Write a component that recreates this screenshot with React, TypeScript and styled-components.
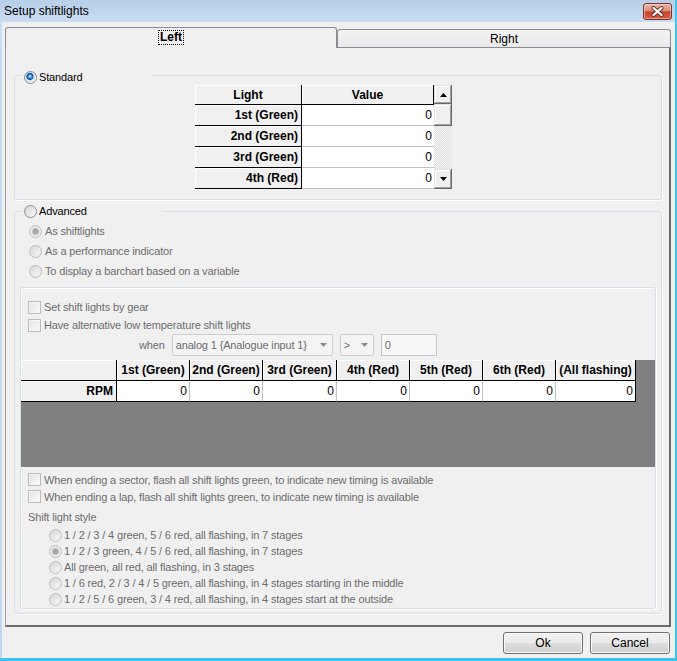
import React from "react";
import styled, { createGlobalStyle } from "styled-components";

// Global page reset
const GlobalStyle = createGlobalStyle`
  html, body {
    margin: 0;
    padding: 0;
    background: #ffffff;
  }
  body {
    font-family: "Liberation Sans", Arial, sans-serif;
    font-size: 11px;
  }
  * {
    box-sizing: border-box;
  }
`;

// Window frame
const Window = styled.div`
  width: 677px;
  height: 661px;
  display: flex;
  flex-direction: column;
  background: linear-gradient(180deg, #b7cfe9 0px, #cadcf1 22px, #c3d8ee 100%);
  border-right: 2px solid #3cc4ef;
  border-bottom: 3px solid #3cc4ef;
  overflow: hidden;
`;

const TitleBar = styled.div`
  flex: none;
  height: 22px;
  display: flex;
  align-items: center;
  padding: 0 3px 0 4px;
  font-size: 12px;
  color: #000;
`;

const Title = styled.span`
  flex: 1;
`;

const CloseButton = styled.div`
  width: 29px;
  height: 17px;
  border: 1px solid #80302a;
  border-radius: 3px;
  background: linear-gradient(
    180deg,
    #eab3a6 0%,
    #dc8c7b 45%,
    #c8452f 52%,
    #d2604a 100%
  );
  box-shadow: inset 0 0 0 1px rgba(255, 255, 255, 0.4);
  display: flex;
  align-items: center;
  justify-content: center;
`;

const Client = styled.div`
  flex: 1;
  margin-left: 2px;
  background: #f0f0f0;
  display: flex;
  flex-direction: column;
  padding: 5px 4px 0 3px;
`;

// Tabs
const TabStrip = styled.div`
  flex: none;
  height: 20px;
  display: flex;
  align-items: flex-end;
`;

const Tab = styled.div<{ $active?: boolean; $width: number }>`
  position: relative;
  z-index: ${(p) => (p.$active ? 1 : 0)};
  width: ${(p) => p.$width}px;
  height: ${(p) => (p.$active ? 21 : 18)}px;
  margin-bottom: ${(p) => (p.$active ? -1 : 0)}px;
  border: 1px solid #898c95;
  border-bottom: none;
  border-radius: 3px 3px 0 0;
  background: ${(p) =>
    p.$active ? "#f0f0f0" : "linear-gradient(180deg, #f3f3f3, #e9e9e9)"};
  display: flex;
  align-items: center;
  justify-content: center;
  padding-bottom: ${(p) => (p.$active ? 2 : 0)}px;
  font-size: 12px;
  font-weight: ${(p) => (p.$active ? "bold" : "normal")};
`;

const FocusText = styled.span`
  outline: 1px dotted #000;
  line-height: 13px;
  padding: 0 1px;
`;

const Panel = styled.div`
  flex: 1;
  border-top: 1px solid #898c95;
  border-left: 1px solid #a0a0a0;
  border-right: 2px solid #6b6b6b;
  border-bottom: 2px solid #6b6b6b;
  padding: 20px 7px 0 8px;
`;

// Group boxes
const GroupBox = styled.fieldset<{ $top?: number }>`
  margin: ${(p) => p.$top ?? 0}px 0 0 0;
  padding: 0;
  min-width: 0;
  border: 1px solid #d5dfe5;
  border-radius: 3px;
  box-shadow: 1px 1px 0 #ffffff;
`;

const Legend = styled.legend<{ $width: number; $drop?: number }>`
  width: ${(p) => p.$width}px;
  height: 14px;
  margin-left: 7px;
  padding: ${(p) => p.$drop ?? 0}px 0 0 2px;
  display: flex;
  align-items: center;
  gap: 2px;
  background: #f0f0f0;
  overflow: visible;
`;

const InnerBox = styled.div`
  margin: 6px 5px 4px 5px;
  padding: 10px 0 1px 0;
  border: 1px solid #d5dfe5;
  border-radius: 3px;
  box-shadow: inset 1px 1px 0 #ffffff, 1px 1px 0 #ffffff;
  display: flex;
  flex-direction: column;
`;

const Stack = styled.div<{ $top?: number }>`
  display: flex;
  flex-direction: column;
  padding-top: ${(p) => p.$top ?? 0}px;
`;

const OptionRow = styled.div<{ $h: number; $indent: number; $gap?: number; $top?: number }>`
  display: flex;
  align-items: center;
  height: ${(p) => p.$h}px;
  padding-left: ${(p) => p.$indent}px;
  margin-top: ${(p) => p.$top ?? 0}px;
  gap: ${(p) => p.$gap ?? 3}px;
`;

const Label = styled.span<{ $disabled?: boolean }>`
  color: ${(p) => (p.$disabled ? "#6d6d6d" : "#000000")};
  font-size: 11px;
  letter-spacing: -0.15px;
  white-space: nowrap;
`;

const Radio = styled.span<{ $checked?: boolean; $disabled?: boolean }>`
  flex: none;
  width: 13px;
  height: 13px;
  border-radius: 50%;
  border: 1px solid ${(p) => (p.$disabled ? "#bcbcbc" : "#8a8c8e")};
  background: ${(p) =>
    p.$checked
      ? p.$disabled
        ? "radial-gradient(circle, #a8a8a8 0 2.4px, #c8c8c8 3.2px, #e6e6e6 4px, #f4f4f4 6px)"
        : "radial-gradient(circle at 45% 40%, #a6dcff 0 0.8px, #2577d6 2px, #0c4f9e 3.2px, #c9d9ea 3.8px, #f4f4f4 6px)"
      : "linear-gradient(135deg, #d8d8d8, #f8f8f8)"};
`;

const CheckBox = styled.span`
  flex: none;
  width: 13px;
  height: 13px;
  border: 1px solid #bcbcbc;
  background: linear-gradient(135deg, #e2e2e2, #fbfbfb);
  box-shadow: inset 0 0 0 1px #f4f4f4;
`;

// Standard grid
const StdGrid = styled.div`
  display: grid;
  grid-template-columns: 107px 132px 18px;
  grid-template-rows: 20px repeat(4, 21px);
  width: 257px;
  margin: 3px 0 10px 180px;
`;

const FixedCell = styled.div<{ $center?: boolean }>`
  background: #f0f0f0;
  border-right: 1px solid #000;
  border-bottom: 1px solid #000;
  box-shadow: inset 1px 1px 0 #ffffff;
  display: flex;
  align-items: center;
  justify-content: ${(p) => (p.$center ? "center" : "flex-end")};
  padding: 0 3px;
  font-size: 12px;
  font-weight: bold;
  color: #000;
  white-space: nowrap;
`;

const DataCell = styled.div<{ $right?: string; $bottom?: string }>`
  background: #ffffff;
  border-right: ${(p) => (p.$right ? `1px solid ${p.$right}` : "none")};
  border-bottom: 1px solid ${(p) => p.$bottom ?? "#c0c0c0"};
  display: flex;
  align-items: center;
  justify-content: flex-end;
  padding-right: 2px;
  font-size: 12px;
  color: #000;
`;

const ScrollBar = styled.div`
  grid-column: 3;
  grid-row: 1 / -1;
  display: flex;
  flex-direction: column;
  background: repeating-conic-gradient(#f7f7f7 0 25%, #dedede 0 50%) 0 0 / 2px 2px;
`;

const Bevel = styled.div<{ $h: number }>`
  flex: none;
  height: ${(p) => p.$h}px;
  background: #f0f0f0;
  box-shadow: inset -1px -1px 0 #696969, inset 1px 1px 0 #e3e3e3,
    inset -2px -2px 0 #a0a0a0, inset 2px 2px 0 #ffffff;
  display: flex;
  align-items: center;
  justify-content: center;
`;

const Track = styled.div`
  flex: 1;
`;

// When row
const WhenRow = styled.div`
  display: flex;
  align-items: center;
  height: 22px;
  padding-left: 118px;
  gap: 7px;
`;

const Combo = styled.div<{ $width: number }>`
  width: ${(p) => p.$width}px;
  height: 22px;
  border: 1px solid #cdcdcd;
  border-radius: 2px;
  background: #f4f4f4;
  display: flex;
  align-items: center;
  padding: 0 5px 0 3px;
  color: #6d6d6d;
  font-size: 11px;
  letter-spacing: -0.15px;
  white-space: nowrap;
`;

const ComboText = styled.span`
  flex: 1;
  overflow: hidden;
`;

const Edit = styled.div`
  width: 56px;
  height: 22px;
  border: 1px solid #c4c8cc;
  background: #f7f7f7;
  display: flex;
  align-items: center;
  padding-left: 3px;
  color: #6d6d6d;
  font-size: 11px;
`;

// RPM grid
const GridArea = styled.div`
  margin-top: 4px;
  height: 107px;
  background: #808080;
`;

const RpmGrid = styled.div`
  display: grid;
  grid-template-columns: 96px 73px 73px 74px 73px 73px 73px 80px;
  grid-template-rows: 21px 21px;
  width: 615px;
`;

// Buttons
const ButtonRow = styled.div`
  flex: none;
  height: 31px;
  display: flex;
  justify-content: flex-end;
  align-items: flex-start;
  gap: 7px;
  padding: 5px 1px 0 0;
`;

const Button = styled.div`
  width: 80px;
  height: 22px;
  border: 1px solid #707070;
  border-radius: 3px;
  background: linear-gradient(180deg, #f2f2f2 0%, #ebebeb 48%, #dddddd 52%, #cfcfcf 100%);
  box-shadow: inset 0 0 0 1px #fbfbfb;
  display: flex;
  align-items: center;
  justify-content: center;
  font-size: 12px;
  color: #000;
`;

const Arrow = ({ up, color = "#000" }: { up?: boolean; color?: string }) => (
  <svg width="7" height="4" viewBox="0 0 7 4">
    <polygon points={up ? "0,4 7,4 3.5,0" : "0,0 7,0 3.5,4"} fill={color} />
  </svg>
);

const gears = ["1st (Green)", "2nd (Green)", "3rd (Green)", "4th (Red)"];
const rpmCols = [
  "1st (Green)",
  "2nd (Green)",
  "3rd (Green)",
  "4th (Red)",
  "5th (Red)",
  "6th (Red)",
  "(All flashing)",
];
const styles = [
  "1 / 2 / 3 / 4 green, 5 / 6 red, all flashing, in 7 stages",
  "1 / 2 / 3 green, 4 / 5 / 6 red, all flashing, in 7 stages",
  "All green, all red, all flashing, in 3 stages",
  "1 / 6 red, 2 / 3 / 4 / 5 green, all flashing, in 4 stages starting in the middle",
  "1 / 2 / 5 / 6 green, 3 / 4 red, all flashing, in 4 stages start at the outside",
];

const App = () => {
  return (
    <>
      <GlobalStyle />
      <Window>
        <TitleBar>
          <Title>Setup shiftlights</Title>
          <CloseButton>
            <svg width="13" height="11" viewBox="0 0 13 11">
              <path
                d="M2.5 2 L10.5 9 M10.5 2 L2.5 9"
                stroke="#6b2a22"
                strokeWidth="4"
                strokeLinecap="round"
              />
              <path
                d="M2.5 2 L10.5 9 M10.5 2 L2.5 9"
                stroke="#ffffff"
                strokeWidth="2.3"
                strokeLinecap="round"
              />
            </svg>
          </CloseButton>
        </TitleBar>

        <Client>
          <TabStrip>
            <Tab $active $width={332}>
              <FocusText>Left</FocusText>
            </Tab>
            <Tab $width={334}>Right</Tab>
          </TabStrip>

          <Panel>
            <GroupBox>
              <Legend $width={130} $drop={4}>
                <Radio $checked />
                <Label>Standard</Label>
              </Legend>
              <StdGrid>
                <FixedCell $center>Light</FixedCell>
                <FixedCell $center>Value</FixedCell>
                <ScrollBar>
                  <Bevel $h={19}>
                    <Arrow up />
                  </Bevel>
                  <Bevel $h={22} />
                  <Track />
                  <Bevel $h={20}>
                    <Arrow />
                  </Bevel>
                </ScrollBar>
                {gears.map((g) => (
                  <React.Fragment key={g}>
                    <FixedCell>{g}</FixedCell>
                    <DataCell>0</DataCell>
                  </React.Fragment>
                ))}
              </StdGrid>
            </GroupBox>

            <GroupBox $top={4}>
              <Legend $width={140}>
                <Radio />
                <Label>Advanced</Label>
              </Legend>
              <Stack $top={3}>
                <OptionRow $h={20} $indent={14}>
                  <Radio $checked $disabled />
                  <Label $disabled>As shiftlights</Label>
                </OptionRow>
                <OptionRow $h={20} $indent={14}>
                  <Radio $disabled />
                  <Label $disabled>As a performance indicator</Label>
                </OptionRow>
                <OptionRow $h={20} $indent={14}>
                  <Radio $disabled />
                  <Label $disabled>To display a barchart based on a variable</Label>
                </OptionRow>
              </Stack>

              <InnerBox>
                <OptionRow $h={18} $indent={7}>
                  <CheckBox />
                  <Label $disabled>Set shift lights by gear</Label>
                </OptionRow>
                <OptionRow $h={18} $indent={7}>
                  <CheckBox />
                  <Label $disabled>Have alternative low temperature shift lights</Label>
                </OptionRow>
                <WhenRow>
                  <Label $disabled>when</Label>
                  <Combo $width={161}>
                    <ComboText>analog 1 {"{"}Analogue input 1{"}"}</ComboText>
                    <Arrow color="#8c8c8c" />
                  </Combo>
                  <Combo $width={34}>
                    <ComboText>&gt;</ComboText>
                    <Arrow color="#8c8c8c" />
                  </Combo>
                  <Edit>0</Edit>
                </WhenRow>

                <GridArea>
                  <RpmGrid>
                    <FixedCell />
                    {rpmCols.map((c) => (
                      <FixedCell key={c} $center>
                        {c}
                      </FixedCell>
                    ))}
                    <FixedCell>RPM</FixedCell>
                    {rpmCols.map((c, i) => (
                      <DataCell
                        key={c}
                        $right={i === rpmCols.length - 1 ? "#000" : "#c0c0c0"}
                        $bottom="#000"
                      >
                        0
                      </DataCell>
                    ))}
                  </RpmGrid>
                </GridArea>

                <OptionRow $h={17} $indent={7} $top={4}>
                  <CheckBox />
                  <Label $disabled>
                    When ending a sector, flash all shift lights green, to indicate new timing is available
                  </Label>
                </OptionRow>
                <OptionRow $h={17} $indent={7}>
                  <CheckBox />
                  <Label $disabled>
                    When ending a lap, flash all shift lights green, to indicate new timing is available
                  </Label>
                </OptionRow>
                <OptionRow $h={14} $indent={7} $top={5}>
                  <Label $disabled>Shift light style</Label>
                </OptionRow>
                <Stack $top={3}>
                  {styles.map((s, i) => (
                    <OptionRow key={s} $h={16} $indent={28} $gap={2}>
                      <Radio $disabled $checked={i === 1} />
                      <Label $disabled>{s}</Label>
                    </OptionRow>
                  ))}
                </Stack>
              </InnerBox>
            </GroupBox>
          </Panel>

          <ButtonRow>
            <Button>Ok</Button>
            <Button>Cancel</Button>
          </ButtonRow>
        </Client>
      </Window>
    </>
  );
};

export default App;
